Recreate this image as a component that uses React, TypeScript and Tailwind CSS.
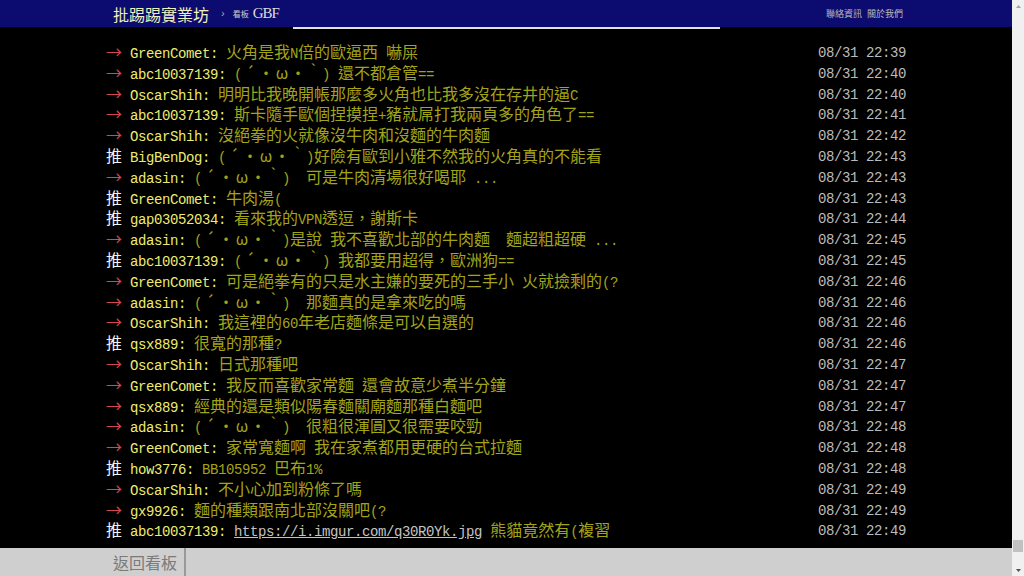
type Push = {
  tag: "推" | "→";
  user: string;
  content: string;
  time: string;
  link?: string;
  after?: string;
};

const pushes: Push[] = [
  { tag: "→", user: "GreenComet", content: "火角是我N倍的歐逼西 嚇屎", time: "08/31 22:39" },
  { tag: "→", user: "abc10037139", content: "(´・ω・｀) 還不都倉管==", time: "08/31 22:40" },
  { tag: "→", user: "OscarShih", content: "明明比我晚開帳那麼多火角也比我多沒在存井的逼C", time: "08/31 22:40" },
  { tag: "→", user: "abc10037139", content: "斯卡隨手歐個捏摸捏+豬就屌打我兩頁多的角色了==", time: "08/31 22:41" },
  { tag: "→", user: "OscarShih", content: "沒絕拳的火就像沒牛肉和沒麵的牛肉麵", time: "08/31 22:42" },
  { tag: "推", user: "BigBenDog", content: "(´・ω・｀)好險有歐到小雅不然我的火角真的不能看", time: "08/31 22:43" },
  { tag: "→", user: "adasin", content: "(´・ω・｀)  可是牛肉清場很好喝耶 ...", time: "08/31 22:43" },
  { tag: "推", user: "GreenComet", content: "牛肉湯(", time: "08/31 22:43" },
  { tag: "推", user: "gap03052034", content: "看來我的VPN透逗，謝斯卡", time: "08/31 22:44" },
  { tag: "→", user: "adasin", content: "(´・ω・｀)是說 我不喜歡北部的牛肉麵  麵超粗超硬 ...", time: "08/31 22:45" },
  { tag: "推", user: "abc10037139", content: "(´・ω・｀) 我都要用超得，歐洲狗==", time: "08/31 22:45" },
  { tag: "→", user: "GreenComet", content: "可是絕拳有的只是水主嫌的要死的三手小 火就撿剩的(?", time: "08/31 22:46" },
  { tag: "→", user: "adasin", content: "(´・ω・｀)  那麵真的是拿來吃的嗎", time: "08/31 22:46" },
  { tag: "→", user: "OscarShih", content: "我這裡的60年老店麵條是可以自選的", time: "08/31 22:46" },
  { tag: "推", user: "qsx889", content: "很寬的那種?", time: "08/31 22:46" },
  { tag: "→", user: "OscarShih", content: "日式那種吧", time: "08/31 22:47" },
  { tag: "→", user: "GreenComet", content: "我反而喜歡家常麵 還會故意少煮半分鐘", time: "08/31 22:47" },
  { tag: "→", user: "qsx889", content: "經典的還是類似陽春麵關廟麵那種白麵吧", time: "08/31 22:47" },
  { tag: "→", user: "adasin", content: "(´・ω・｀)  很粗很渾圓又很需要咬勁", time: "08/31 22:48" },
  { tag: "→", user: "GreenComet", content: "家常寬麵啊 我在家煮都用更硬的台式拉麵", time: "08/31 22:48" },
  { tag: "推", user: "how3776", content: "BB105952 巴布1%", time: "08/31 22:48" },
  { tag: "→", user: "OscarShih", content: "不小心加到粉條了嗎", time: "08/31 22:49" },
  { tag: "→", user: "gx9926", content: "麵的種類跟南北部沒關吧(?", time: "08/31 22:49" },
  {
    tag: "推",
    user: "abc10037139",
    content: "",
    link: "https://i.imgur.com/q30R0Yk.jpg",
    after: " 熊貓竟然有(複習",
    time: "08/31 22:49",
  },
];

// half-width runs in a mono face squeezed to 8px, full-width chars boxed at 16px
function Mixed({ text }: { text: string }) {
  const parts: { wide: boolean; s: string }[] = [];
  for (const ch of Array.from(text)) {
    const wide = ch.charCodeAt(0) > 0x7f;
    const last = parts[parts.length - 1];
    if (last && last.wide === wide) last.s += ch;
    else parts.push({ wide, s: ch });
  }
  return (
    <>
      {parts.map((p, i) =>
        p.wide ? (
          Array.from(p.s).map((c, j) => (
            <span
              key={`${i}-${j}`}
              className="inline-block w-4 text-center font-['Noto_Sans_CJK_TC',sans-serif] text-[16px]"
            >
              {c}
            </span>
          ))
        ) : (
          <span key={i} className="font-['Liberation_Mono',monospace] text-[14px] tracking-[-0.4px]">
            {p.s}
          </span>
        )
      )}
    </>
  );
}

function PushRow({ p }: { p: Push }) {
  return (
    <div className="flex h-[20.8px] justify-between whitespace-pre leading-[20.8px]">
      <div>
        <span className={p.tag === "推" ? "text-[#f4f4f4]" : "text-[#d4474f]"}>
          <Mixed text={p.tag + " "} />
        </span>
        <span className="text-[#ecec72]">
          <Mixed text={p.user + ":"} />
        </span>
        <span className="text-[#a3a31a]">
          <Mixed text={" " + p.content} />
          {p.link && (
            <span className="text-[#c4c4c4] underline">
              <Mixed text={p.link} />
            </span>
          )}
          {p.after && <Mixed text={p.after} />}
        </span>
      </div>
      <div className="text-[#bbbbbb]">
        <Mixed text={p.time} />
      </div>
    </div>
  );
}

function Scrollbar() {
  return (
    <div className="flex w-[12px] flex-col bg-[#f0f0f0]">
      <div className="flex h-[12px] items-center justify-center">
        <svg width="5" height="3" viewBox="0 0 5 3">
          <path d="M2.5 0 L5 3 L0 3 Z" fill="#a3a3a3" />
        </svg>
      </div>
      <div className="flex flex-1 flex-col justify-end pb-[12px]">
        <div className="mx-[1px] h-[12px] bg-[#c1c1c1]" />
      </div>
      <div className="flex h-[12px] items-center justify-center">
        <svg width="5" height="3" viewBox="0 0 5 3">
          <path d="M0 0 L5 0 L2.5 3 Z" fill="#505050" />
        </svg>
      </div>
    </div>
  );
}

export default function App() {
  return (
    <div className="flex h-[576px] w-[1024px] overflow-hidden bg-black">
      <div className="flex flex-1 flex-col">
        {/* top bar */}
        <div className="h-[27px] bg-[#0c0b70]">
          <div className="mx-auto flex h-full w-[800px] items-center justify-between">
            <div className="flex items-center pl-[7px]">
              <span className="font-['Noto_Sans_CJK_TC',sans-serif] text-[16px] leading-none text-[#f0f0bc]">
                批踢踢實業坊
              </span>
              <span className="ml-[12px] font-['Liberation_Sans',sans-serif] text-[11px] text-[#aaaaaa]">›</span>
              <span className="ml-[8px] font-['Noto_Sans_CJK_TC',sans-serif] text-[8px] text-[#cccccc]">看板</span>
              <span className="ml-[4px] font-['Liberation_Serif',serif] text-[15px] tracking-[-1px] text-[#dddddd]">
                GBF
              </span>
            </div>
            <div className="flex gap-[5px] pr-[3px] font-['Noto_Sans_CJK_TC',sans-serif] text-[9px] text-[#bbbbbb]">
              <span>聯絡資訊</span>
              <span>關於我們</span>
            </div>
          </div>
        </div>

        {/* article body, scrolled to the push list */}
        <div className="flex-1 overflow-hidden">
          <div className="mx-auto w-[800px]">
            <div className="ml-[187px] h-[2px] w-[427px] bg-[#e2e2e2]" />
            <div className="mt-[12px]">
              {pushes.map((p, i) => (
                <PushRow key={i} p={p} />
              ))}
            </div>
          </div>
        </div>

        {/* bottom action bar */}
        <div className="h-[28px] bg-[#cfcfcf]">
          <div className="mx-auto flex h-full w-[800px]">
            <div className="flex items-center border-r-2 border-[#999999] px-[7px] font-['Noto_Sans_CJK_TC',sans-serif] text-[16px] text-[#7a7a7a]">
              返回看板
            </div>
          </div>
        </div>
      </div>
      <Scrollbar />
    </div>
  );
}
